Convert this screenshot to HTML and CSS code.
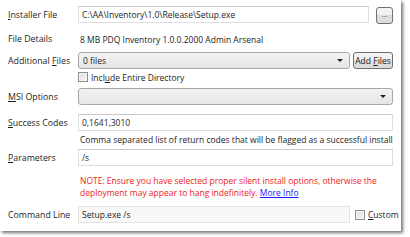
FILE: index.html
```html
<!DOCTYPE html>
<html>
<head>
<meta charset="utf-8">
<link rel="stylesheet" href="styles.css">
</head>
<body>
<div class="panel">
  <div class="row r1">
    <div class="label"><u>I</u>nstaller File</div>
    <div class="field"><div class="input">C:\AA\Inventory\1.0\Release\Setup.exe</div></div>
    <div class="btn small">...</div>
  </div>
  <div class="row r2">
    <div class="label">File Details</div>
    <div class="field text">8 MB PDQ Inventory 1.0.0.2000 Admin Arsenal</div>
  </div>
  <div class="row r3">
    <div class="label">Additional <u>F</u>iles</div>
    <div class="field"><div class="combo">0 files<span class="arrow"></span></div></div>
    <div class="btn add">Add <u>F</u>iles</div>
  </div>
  <div class="row r4">
    <div class="label"></div>
    <div class="field check"><span class="box"></span>Incl<u>u</u>de Entire Directory</div>
  </div>
  <div class="row r5">
    <div class="label"><u>M</u>SI Options</div>
    <div class="field"><div class="combo"><span class="arrow"></span></div></div>
  </div>
  <div class="row r6">
    <div class="label"><u>S</u>uccess Codes</div>
    <div class="field"><div class="input">0,1641,3010</div></div>
  </div>
  <div class="row r7">
    <div class="label"></div>
    <div class="field text help">Comma separated list of return codes that will be flagged as a successful installation.</div>
  </div>
  <div class="row r8">
    <div class="label"><u>P</u>arameters</div>
    <div class="field"><div class="input">/s</div></div>
  </div>
  <div class="row r9">
    <div class="label"></div>
    <div class="field note">NOTE: Ensure you have selected proper silent install options, otherwise the deployment may appear to hang indefinitely. <a class="link">More Info</a></div>
  </div>
  <div class="row r10">
    <div class="label">Command Line</div>
    <div class="field"><div class="input ro">Setup.exe /s</div></div>
    <div class="check custom"><span class="box"></span><u>C</u>ustom</div>
  </div>
</div>
</body>
</html>
```

FILE: styles.css
```css
html, body {
  margin: 0;
  padding: 0;
  background: #ffffff;
}
body {
  width: 410px;
  height: 237px;
  overflow: hidden;
  font-family: "Open Sans", "Noto Sans", sans-serif;
  font-size: 8.5px;
  color: #1e1e1e;
}
.panel {
  width: 401px;
  height: 231px;
  background: #ffffff;
  box-shadow: 2px 2px 3px rgba(0,0,0,0.55);
  box-sizing: border-box;
  padding: 6px 8px 0 8px;
  display: flex;
  flex-direction: column;
}
.row {
  display: flex;
  align-items: center;
  height: 17px;
}
.label {
  width: 70px;
  flex: none;
  white-space: nowrap;
  font-size: 8.8px;
}
.field {
  flex: 1;
  min-width: 0;
  height: 100%;
  display: flex;
  align-items: center;
  white-space: nowrap;
}
.text { padding-left: 2px; overflow: hidden; }
.r2 { margin-top: 8px; height: 16px; }
.r3 { margin-top: 5px; }
.r4 { margin-top: 1px; height: 14px; }
.r5 { margin-top: 4px; }
.r6 { margin-top: 9px; }
.r7 { margin-top: 1px; height: 15px; }
.r8 { margin-top: 2px; }
.r9 { margin-top: 8px; height: 26px; }
.r10 { margin-top: 6px; }
.input {
  box-sizing: border-box;
  width: 100%;
  height: 17px;
  border: 1px solid #dedede;
  border-top-color: #c8c8c8;
  background: #fff;
  padding: 0 3px;
  line-height: 15px;
  overflow: hidden;
}
.input.ro { background: #f8f8f8; border-color: #e2e2e2; }
.combo {
  position: relative;
  box-sizing: border-box;
  width: 100%;
  height: 17px;
  border: 1px solid #a8a8a8;
  border-radius: 3px;
  background: linear-gradient(#f3f3f3, #e6e6e6);
  padding: 0 4px;
  line-height: 15px;
}
.arrow {
  position: absolute;
  right: 6px;
  top: 6px;
  width: 0;
  height: 0;
  border-left: 3px solid transparent;
  border-right: 3px solid transparent;
  border-top: 3px solid #202020;
}
.btn {
  flex: none;
  box-sizing: border-box;
  height: 17px;
  border: 1px solid #707070;
  border-radius: 3px;
  background: linear-gradient(#f2f2f2 50%, #dddddd 50%);
  line-height: 15px;
  text-align: center;
}
.btn.small { width: 17px; margin-left: 7px; margin-top: 2px; font-size: 7px; line-height: 13px; color: #555; }
.btn.add { width: 40px; margin-left: 3px; }
.check { display: flex; align-items: center; }
.box {
  display: inline-block;
  flex: none;
  box-sizing: border-box;
  width: 10px;
  height: 10px;
  border: 1px solid #8e8f8f;
  background: linear-gradient(135deg, #dcdcdc, #f8f8f8);
  box-shadow: inset 0 0 0 1px #f4f4f4;
  margin-right: 3px;
}
.custom { flex: none; width: 38px; margin-left: 5px; white-space: nowrap; }
.help { overflow: hidden; }
.note {
  white-space: normal;
  display: block;
  color: #ec1c24;
  line-height: 12px;
  padding-left: 2px;
  padding-top: 1px;
}
.link { color: #2020ff; text-decoration: underline; }
```
